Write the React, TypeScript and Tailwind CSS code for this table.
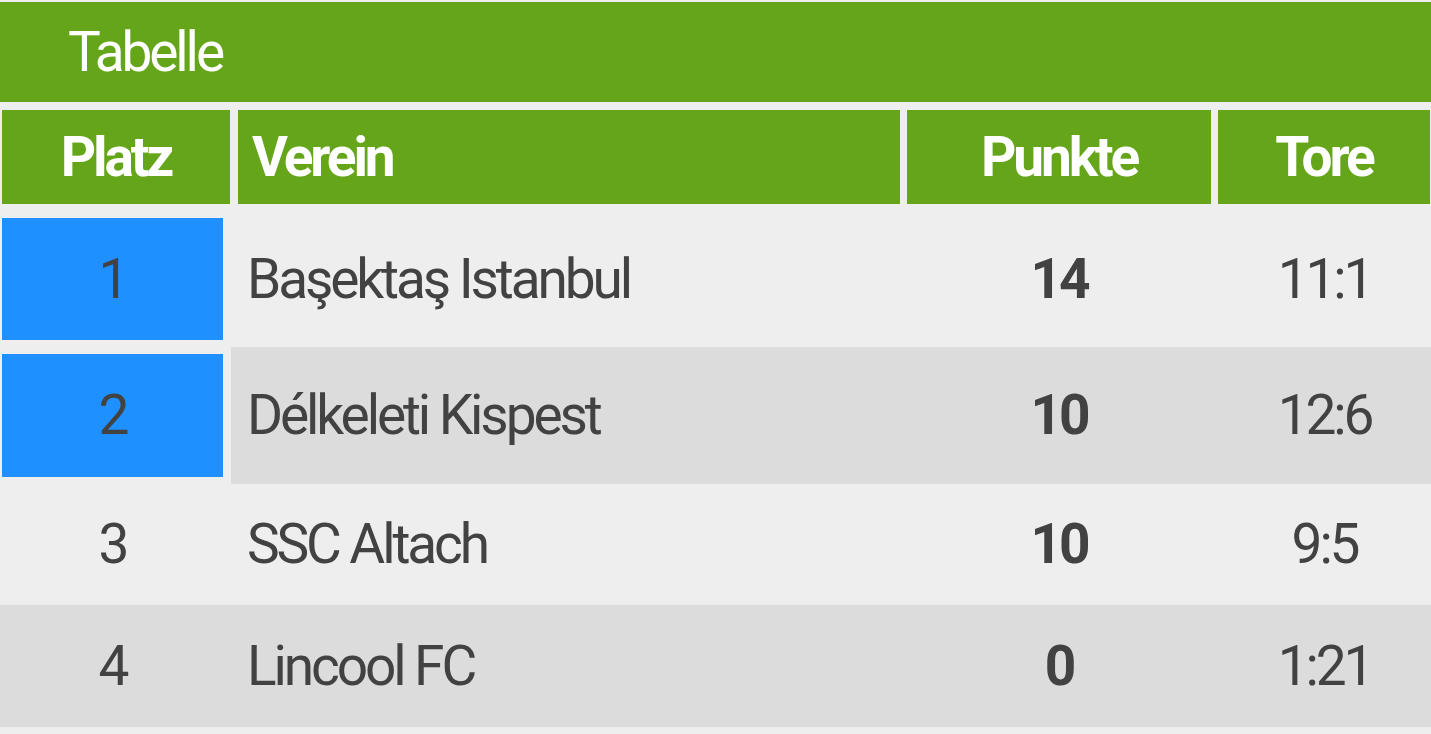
import React from 'react'

type Row = {
  place: number
  club: string
  points: number
  goals: string
  promo?: boolean
  shaded?: boolean
}

const ROWS: Row[] = [
  { place: 1, club: 'Başektaş Istanbul', points: 14, goals: '11:1', promo: true },
  { place: 2, club: 'Délkeleti Kispest', points: 10, goals: '12:6', promo: true, shaded: true },
  { place: 3, club: 'SSC Altach', points: 10, goals: '9:5' },
  { place: 4, club: 'Lincool FC', points: 0, goals: '1:21', shaded: true },
]

const HEIGHTS = ['h-[136px]', 'h-[137px]', 'h-[121px]', 'h-[122px]']

export default function App() {
  return (
    <div
      className="min-h-[734px] w-[1431px] bg-[#eeeeee] pt-[2px] text-[#424242]"
      style={{ fontFamily: 'Roboto, "Liberation Sans", sans-serif' }}
    >
      {/* title band */}
      <div className="flex h-[100px] items-center bg-[#65a519] pl-[68px] text-[55px] leading-none tracking-[-3.1px] text-white">
        Tabelle
      </div>

      {/* column headers */}
      <div className="mt-[8px] flex h-[94px] gap-[7px] pl-[2px] text-[55px] font-bold leading-none tracking-[-3.1px] text-white">
        <div className="flex w-[228px] items-center justify-center bg-[#65a519]">Platz</div>
        <div className="ml-[1px] flex w-[662px] items-center bg-[#65a519] pl-[14px]">Verein</div>
        <div className="flex w-[304px] items-center justify-center bg-[#65a519]">Punkte</div>
        <div className="flex w-[212px] items-center justify-center bg-[#65a519]">Tore</div>
      </div>

      <div className="mt-[7px]">
        {ROWS.map((r, i) => (
          <div
            key={r.place}
            className={`flex ${HEIGHTS[i]} text-[55px] leading-none tracking-[-3.1px] ${
              r.shaded && !r.promo ? 'bg-[#dcdcdc]' : ''
            }`}
          >
            <div className="flex w-[231px] shrink-0 py-[7px] pl-[2px] pr-[8px]">
              <div
                className={`flex flex-1 items-center justify-center ${r.promo ? 'bg-[#1e90ff]' : ''}`}
              >
                {r.place}
              </div>
            </div>
            <div className={`flex flex-1 ${r.shaded && r.promo ? 'bg-[#dcdcdc]' : ''}`}>
              <div className="flex w-[676px] items-center pl-[16px]">{r.club}</div>
              <div className="flex w-[304px] items-center justify-center font-bold">{r.points}</div>
              <div className="ml-[7px] flex w-[213px] items-center justify-center">{r.goals}</div>
            </div>
          </div>
        ))}
      </div>
    </div>
  )
}
